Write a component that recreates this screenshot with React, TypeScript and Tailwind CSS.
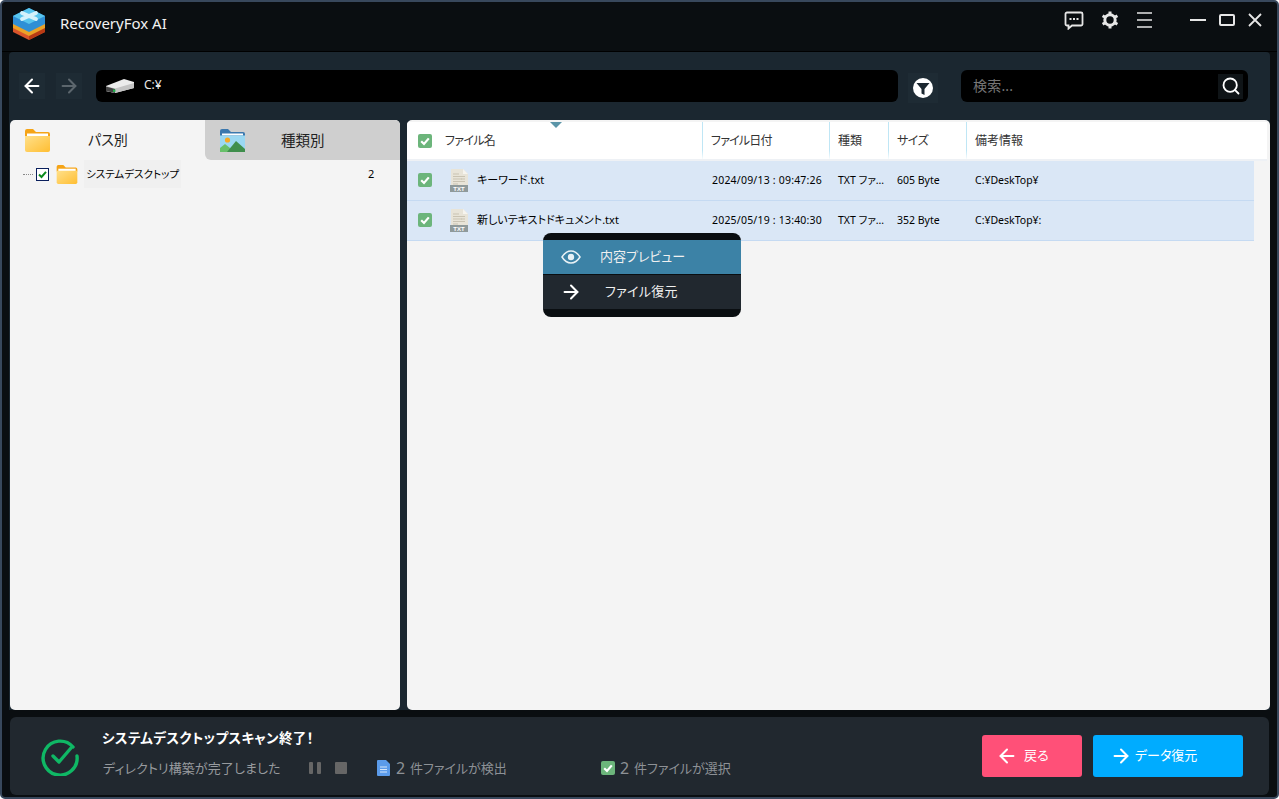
import { ArrowLeft, ArrowRight, Search } from "lucide-react";

const font = { fontFamily: '"Noto Sans", "Noto Sans CJK JP", sans-serif' };

const Logo = () => (
  <svg width="34" height="34" viewBox="0 0 34 34">
    <polygon points="1,21 17,13 33,21 33,25 17,33 1,25" fill="#d9542b" />
    <polygon points="17,25 33,17 33,25 17,33" fill="#b93a14" />
    <polygon points="1,17 17,9 33,17 33,21 17,29 1,21" fill="#eba227" />
    <polygon points="1,9 17,1 33,9 33,17 17,25 1,17" fill="#2f8fd6" />
    <polygon points="1,9 17,1 33,9 17,17" fill="#58c5ee" />
    <path d="M10 6 L24 12 M24 6 L10 12" stroke="#d5f2fb" strokeWidth="3.800" strokeLinecap="round" />
  </svg>
);

const Folder = ({ w, h }: { w: number; h: number }) => (
  <svg width={w} height={h} viewBox="0 0 25 23">
    <defs>
      <linearGradient id="fold" x1="0" y1="0" x2="1" y2="1">
        <stop offset="0" stopColor="#ffe08a" />
        <stop offset="1" stopColor="#ffbe32" />
      </linearGradient>
    </defs>
    <path d="M0 2a2 2 0 0 1 2-2h6l3 3h12a2 2 0 0 1 2 2v3H0z" fill="#f5a416" />
    <rect x="2" y="4.500" width="21" height="3" fill="#fff" />
    <path d="M0 7h25v14a2 2 0 0 1-2 2H2a2 2 0 0 1-2-2z" fill="url(#fold)" />
  </svg>
);

const PictureFolder = () => (
  <svg width="25" height="23" viewBox="0 0 25 23">
    <path d="M0 2a2 2 0 0 1 2-2h6l3 3h12a2 2 0 0 1 2 2v3H0z" fill="#3b78ae" />
    <rect x="2" y="4.500" width="21" height="2" fill="#fff" />
    <rect y="6.500" width="25" height="16.500" fill="#9bd8f2" />
    <circle cx="7.500" cy="11" r="2.600" fill="#f7a823" />
    <path d="M0 23v-4l5-4 5 4 1 4z" fill="#68c06a" />
    <path d="M7 23l9-11 9 8v3z" fill="#3f8e4c" />
  </svg>
);

const Drive = () => (
  <svg width="30" height="16" viewBox="0 0 30 16">
    <polygon points="1,8 19,1 29,4 29,10 10,15 1,13" fill="#ececec" />
    <polygon points="1,8 10,10.500 29,5 29,10 10,15 1,13" fill="#c4c4c4" />
    <polygon points="1,8.500 10,11 10,15 1,13" fill="#444" />
    <rect x="8" y="11.500" width="2.400" height="2.400" fill="#21b14c" />
  </svg>
);

const GreenCheck = ({ size = 14 }: { size?: number }) => (
  <svg width={size} height={size} viewBox="0 0 14 14" className="shrink-0">
    <rect width="14" height="14" rx="2" fill="#6cb57b" />
    <path d="M3.200 7.200 L6 10 L10.800 4.400" fill="none" stroke="#fff" strokeWidth="2.200" />
  </svg>
);

const TxtIcon = () => (
  <svg width="19" height="23" viewBox="0 0 19 23" className="shrink-0">
    <path d="M1 0h12l5 5v12H1z" fill="#e8e4d8" />
    <path d="M13 0l5 5h-5z" fill="#f6f4ee" />
    <path d="M3 5h6M3 7.500h12M3 10h9M11 10h4M3 12.500h12M3 15h5" stroke="#c9c3b2" strokeWidth="1" />
    <rect x="0" y="16" width="18" height="7" fill="#8f9a9b" />
    <text x="9" y="22" fontSize="6" fontWeight="700" fill="#fff" textAnchor="middle" fontFamily="Liberation Sans">
      TXT
    </text>
  </svg>
);

const rows = [
  { name: "キーワード.txt", date: "2024/09/13 : 09:47:26", size: "605 Byte", note: "C:¥DeskTop¥" },
  { name: "新しいテキストドキュメント.txt", date: "2025/05/19 : 13:40:30", size: "352 Byte", note: "C:¥DeskTop¥:" },
];

const divider = "flex h-full items-center border-l border-[#bfe6f5] pl-[8px] [border-image:linear-gradient(#bfe6f5,#bfe6f5_75%,transparent)_1]";

export default function App() {
  return (
    <div
      style={font}
      className='h-[799px] w-[1279px] overflow-hidden rounded-[5px] border-2 border-[#38485c] bg-[#0a0e11] text-xs [font-feature-settings:"palt"]'
    >
      {/* title bar */}
      <div className="flex h-[50px] items-center border-b border-black pb-[6px] pl-[10px] pr-[15px]">
        <Logo />
        <span className="-mt-[2px] ml-[14px] text-[15px] text-[#f2f2f2]">RecoveryFox AI</span>
        <div className="mt-[8px] ml-auto flex items-center self-start text-[#e6e6e6]">
          <svg width="20" height="20" viewBox="0 0 20 20">
            <path d="M3 2.500h14a1.500 1.500 0 0 1 1.500 1.500v10a1.500 1.500 0 0 1-1.500 1.500H8l-3.500 3v-3H3A1.500 1.500 0 0 1 1.500 14V4A1.500 1.500 0 0 1 3 2.500z" fill="none" stroke="currentColor" strokeWidth="1.800" />
            <path d="M5.500 9h2M9 9h2M12.500 9h2" stroke="currentColor" strokeWidth="2" />
          </svg>
          <svg width="18" height="18" viewBox="0 0 18 18" className="ml-[17px]">
            <circle cx="9" cy="9" r="5.200" fill="none" stroke="currentColor" strokeWidth="3" />
            <path d="M9 0.500v3M9 14.500v3M1.600 4.700l2.600 1.500M13.800 11.800l2.600 1.500M1.600 13.300l2.600-1.500M13.800 6.200l2.600-1.500" stroke="currentColor" strokeWidth="3" />
          </svg>
          <svg width="15" height="16" viewBox="0 0 15 16" className="ml-[18px]">
            <path d="M0 1h15M0 8h15M0 15h15" stroke="currentColor" strokeWidth="1.600" />
          </svg>
          <svg width="16" height="4" viewBox="0 0 16 4" className="ml-[38px]">
            <path d="M0 2h16" stroke="currentColor" strokeWidth="1.800" />
          </svg>
          <svg width="16" height="12" viewBox="0 0 16 12" className="ml-[13px]">
            <rect x="1" y="1" width="14" height="10" rx="1" fill="none" stroke="currentColor" strokeWidth="2" />
          </svg>
          <svg width="14" height="14" viewBox="0 0 14 14" className="ml-[13px]">
            <path d="M1 1l12 12M13 1L1 13" stroke="currentColor" strokeWidth="1.800" />
          </svg>
        </div>
      </div>

      <div className="mx-[7px] flex h-[658px] flex-col rounded-t-[4px] bg-[#1b2730]">
        {/* toolbar */}
        <div className="flex h-[68px] items-center pl-[10px] pr-[22px]">
          <div className="flex h-[26px] w-[26px] items-center justify-center bg-[#1e2b34]">
            <ArrowLeft size={22} strokeWidth={2.2} className="text-white" />
          </div>
          <div className="ml-[11px] flex h-[26px] w-[26px] items-center justify-center bg-[#1e2b34]">
            <ArrowRight size={22} strokeWidth={2.2} className="text-[#5c666d]" />
          </div>
          <div className="ml-[14px] flex h-[32px] w-[802px] items-center rounded-md bg-black pl-[9px]">
            <Drive />
            <span className="-mt-[2px] ml-[9px] text-[12px] text-[#e8e8e8]">C:¥</span>
          </div>
          <div className="ml-[10px] mt-[4px] flex h-[30px] w-[30px] items-center justify-center bg-[#1e2b34]">
            <svg width="20" height="20" viewBox="0 0 20 20">
              <circle cx="10" cy="10" r="10" fill="#fff" />
              <path d="M3.500 5h13l-5 6v6l-3-1.600V11z" fill="#1b2730" />
            </svg>
          </div>
          <div className="ml-[23px] flex h-[32px] w-[287px] items-center rounded-md bg-black pl-[12px] pr-[5px]">
            <span className="text-[14px] tracking-[0.2px] text-[#777]">検索...</span>
            <div className="ml-auto flex h-[25px] w-[25px] items-center justify-center bg-[#0f1417]">
              <Search size={20} strokeWidth={2.2} className="text-white" />
            </div>
          </div>
        </div>

        {/* panels */}
        <div className="flex h-[590px] pl-[1px]">
          <div className="w-[390px] overflow-hidden rounded-[5px] bg-[#f4f4f4]">
            <div className="flex h-[40px]">
              <div className="flex w-[195px] items-center pl-[15px]">
                <Folder w={25} h={23} />
                <span className="ml-[38px] pt-[1px] text-[14px] text-[#222]">パス別</span>
              </div>
              <div className="flex w-[195px] items-center rounded-bl-[6px] bg-[#cfcfcf] pl-[15px]">
                <PictureFolder />
                <span className="ml-[36px] pt-[1px] text-[14.500px] text-[#222]">種類別</span>
              </div>
            </div>
            <div className="flex h-[28px] items-center pl-[13px]">
              <span className="w-[10px] border-t border-dotted border-[#888]" />
              <span className="ml-[3px] flex h-[13px] w-[13px] items-center justify-center border border-[#0a1f5c] bg-white">
                <svg width="9" height="9" viewBox="0 0 9 9">
                  <path d="M1 4.500 L3.500 7 L8 1.800" fill="none" stroke="#0c8a1e" strokeWidth="2" />
                </svg>
              </span>
              <span className="ml-[7px]">
                <Folder w={22} h={19} />
              </span>
              <span className="ml-[6px] flex h-[28px] w-[97px] items-center justify-center whitespace-nowrap bg-[#f0f0f0] text-[10.500px] text-black">
                システムデスクトップ
              </span>
              <span className="ml-[187px] text-[11px] text-black">2</span>
            </div>
          </div>

          <div className="relative ml-[7px] w-[863px] overflow-hidden rounded-[5px] bg-[#f4f4f4]">
            <div className="mr-[3px] mt-[2px] flex h-[39px] items-center border-b-2 border-[#eef1f5] bg-white text-[12px] text-[#333]">
              <div className="relative flex h-full w-[295px] items-center pl-[11px]">
                <GreenCheck />
                <span className="ml-[13px] tracking-[-0.7px]">ファイル名</span>
                <span className="absolute left-[143px] top-0 h-0 w-0 border-x-[6px] border-t-[6px] border-x-transparent border-t-[#5b95a8]" />
              </div>
              <div className={`${divider} w-[127px]`}>
                <span className="tracking-[-0.8px]">ファイル日付</span>
              </div>
              <div className={`${divider} w-[59px]`}>種類</div>
              <div className={`${divider} w-[78px]`}>
                <span className="tracking-[-0.5px]">サイズ</span>
              </div>
              <div className={divider}>備考情報</div>
            </div>
            {rows.map((r) => (
              <div key={r.name} className="flex h-[40px] w-[847px] items-center border-b border-[#c5daf2] bg-[#dae7f6] pb-[1px] text-[10.500px] text-black">
                <div className="flex w-[295px] items-center pl-[11px]">
                  <GreenCheck />
                  <span className="ml-[18px]">
                    <TxtIcon />
                  </span>
                  <span className="ml-[8px] text-[11px]">{r.name}</span>
                </div>
                <span className="w-[127px] pl-[10px] tracking-[0.2px]">{r.date}</span>
                <span className="w-[59px] whitespace-nowrap pl-[9px]">TXT ファ…</span>
                <span className="w-[78px] pl-[9px]">{r.size}</span>
                <span className="pl-[9px]">{r.note}</span>
              </div>
            ))}

            {/* context menu */}
            <div className="absolute left-[136px] top-[113px] w-[198px] rounded-lg bg-[#0a0e11] pb-[8px] pt-[7px] text-[13px] text-[#f0f0f0]">
              <div className="flex h-[34px] items-center bg-[#3c82a6] pl-[18px]">
                <svg width="20" height="14" viewBox="0 0 20 14">
                  <path d="M1 7c2.500-4 5.500-6 9-6s6.500 2 9 6c-2.500 4-5.500 6-9 6s-6.500-2-9-6z" fill="none" stroke="#e8f1f5" strokeWidth="1.500" />
                  <circle cx="10" cy="7" r="3.200" fill="#e8f1f5" />
                </svg>
                <span className="ml-[19px]">内容プレビュー</span>
              </div>
              <div className="mt-px flex h-[34px] items-center bg-[#21282f] pl-[17px]">
                <ArrowRight size={22} strokeWidth={2.2} className="text-white" />
                <span className="ml-[23px] tracking-[0.3px]">ファイル復元</span>
              </div>
            </div>
          </div>
        </div>
      </div>

      {/* footer */}
      <div className="mx-[8px] mt-[7px] flex h-[78px] items-center rounded-[6px] bg-[#21282f] pl-[30px] pr-[26px]">
        <svg width="40" height="40" viewBox="0 0 40 40" className="shrink-0">
          <path d="M33 11A17 17 0 1 0 37 20" fill="none" stroke="#0fb865" strokeWidth="3.400" strokeLinecap="round" />
          <path d="M13 20l6 6 12-14" fill="none" stroke="#0fb865" strokeWidth="3.400" strokeLinecap="round" strokeLinejoin="round" />
        </svg>
        <div className="-mt-[5px] ml-[22px]">
          <div className="text-[13.500px] font-bold tracking-[0.4px] text-white">システムデスクトップスキャン終了！</div>
          <div className="mt-[12px] flex h-[20px] items-center text-[13px] text-[#8d9196]">
            <span className="w-[207px] whitespace-nowrap pl-px tracking-[0.1px] text-[#979a9e]">ディレクトリ構築が完了しました</span>
            <span className="flex gap-[4px]">
              <span className="h-[12px] w-[4px] rounded-[1px] bg-[#666]" />
              <span className="h-[12px] w-[4px] rounded-[1px] bg-[#666]" />
            </span>
            <span className="ml-[14px] h-[12px] w-[12px] rounded-[1px] bg-[#666]" />
            <svg width="13" height="16" viewBox="0 0 13 16" className="ml-[30px]">
              <path d="M0 1a1 1 0 0 1 1-1h8l4 4v11a1 1 0 0 1-1 1H1a1 1 0 0 1-1-1z" fill="#5b9bea" />
              <path d="M3 7h7M3 9.500h7M3 12h7" stroke="#d6e6fa" strokeWidth="1" />
            </svg>
            <span className="ml-[6px] w-[14px] text-[16px] leading-none">2</span>
            <span className="w-[97px] whitespace-nowrap">件ファイルが検出</span>
            <span className="ml-[94px]">
              <GreenCheck />
            </span>
            <span className="ml-[5px] w-[14px] text-[16px] leading-none">2</span>
            <span className="whitespace-nowrap">件ファイルが選択</span>
          </div>
        </div>
        <div className="ml-auto flex gap-[11px] text-[13px] text-white">
          <button className="flex h-[42px] w-[100px] items-center rounded-[3px] bg-[#ff5078] pl-[14px]">
            <ArrowLeft size={22} strokeWidth={2.2} />
            <span className="ml-[6px]">戻る</span>
          </button>
          <button className="flex h-[42px] w-[150px] items-center rounded-[3px] bg-[#00acff] pl-[17px]">
            <ArrowRight size={22} strokeWidth={2.2} />
            <span className="ml-[3px]">データ復元</span>
          </button>
        </div>
      </div>
    </div>
  );
}
